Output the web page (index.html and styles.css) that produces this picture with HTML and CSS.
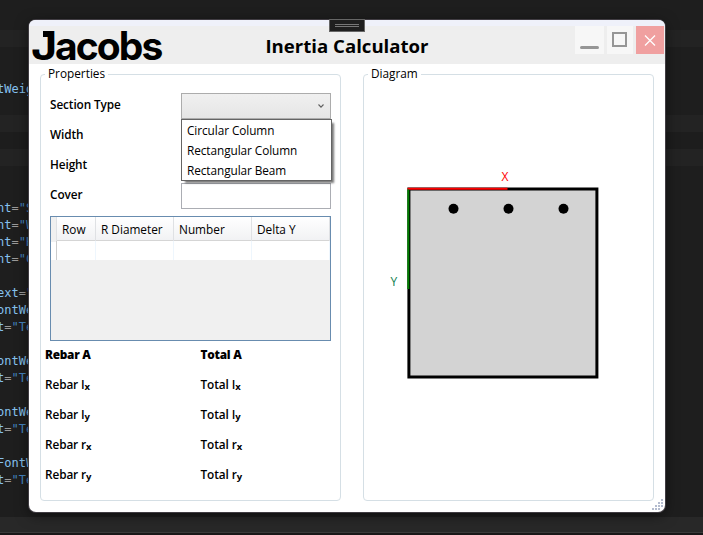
FILE: index.html
```html
<!DOCTYPE html>
<html lang="en">
<head>
<meta charset="utf-8">
<title>Inertia Calculator</title>
<link rel="stylesheet" href="styles.css">
</head>
<body>
<pre class="editor" aria-hidden="true">




<b>tWeig</b>






<b>nt</b>=<i>"S</i>
<b>nt</b>=<i>"W</i>
<b>nt</b>=<i>"H</i>
<b>nt</b>=<i>"C</i>

<b>ext</b>=<i>"</i>
<b>ontWe</b>
<b>t</b>=<i>"Te</i>

<b>ontWe</b>
<b>t</b>=<i>"Te</i>

<b>ontWe</b>
<b>t</b>=<i>"Te</i>

<b>FontW</b>
<b>t</b>=<i>"Te</i>
</pre>
<main class="window">
  <div class="grabber"><span></span></div>
  <header class="titlebar">
    <div class="logo"><span>J</span>acobs</div>
    <h1>Inertia Calculator</h1>
    <div class="controls">
      <button class="min" aria-label="Minimize"><svg width="29" height="28"><path d="M6.500 21.500h16" stroke="#969696" stroke-width="3" stroke-linecap="round"/></svg></button>
      <button class="max" aria-label="Maximize"><svg width="26" height="28"><rect x="6" y="7" width="13" height="13" fill="none" stroke="#969696" stroke-width="2"/></svg></button>
      <button class="close" aria-label="Close"><svg width="28" height="28"><path d="M9 9.500l10 10M19 9.500l-10 10" stroke="#fff" stroke-width="1.300"/></svg></button>
    </div>
  </header>
  <div class="panels">
    <fieldset class="properties">
      <legend>Properties</legend>
      <div class="form">
        <label>Section Type</label>
        <div class="combo">
          <svg width="8" height="6"><path d="M1.500 1.500L4 4.100L6.500 1.500" fill="none" stroke="#606060" stroke-width="1.100"/></svg>
          <ul class="menu"><li>Circular Column</li><li>Rectangular Column</li><li>Rectangular Beam</li></ul>
        </div>
        <label>Width</label><div class="input"></div>
        <label>Height</label><div class="input"></div>
        <label>Cover</label><div class="input"></div>
      </div>
      <div class="table">
        <div class="row head"><span></span><span>Row</span><span>R Diameter</span><span>Number</span><span>Delta Y</span></div>
        <div class="row blank"><span></span><span></span><span></span><span></span><span></span></div>
      </div>
      <div class="results">
        <span class="strong">Rebar A</span><span class="strong">Total A</span>
        <span>Rebar I<sub>x</sub></span><span>Total I<sub>x</sub></span>
        <span>Rebar I<sub>y</sub></span><span>Total I<sub>y</sub></span>
        <span>Rebar r<sub>x</sub></span><span>Total r<sub>x</sub></span>
        <span>Rebar r<sub>y</sub></span><span>Total r<sub>y</sub></span>
      </div>
    </fieldset>
    <fieldset class="diagram">
      <legend>Diagram</legend>
      <svg class="section" width="220" height="220" viewBox="384 164 220 220">
        <rect x="408.900" y="189" width="188" height="188" fill="#d3d3d3" stroke="#000" stroke-width="3"/>
        <path d="M407.500 188.700H507.500" stroke="red" stroke-width="2"/>
        <path d="M408.300 189.500V289" stroke="green" stroke-width="2"/>
        <circle cx="453.500" cy="208.800" r="5"/><circle cx="508.500" cy="208.800" r="5"/><circle cx="563.500" cy="208.800" r="5"/>
        <text x="501.500" y="181" fill="red">X</text>
        <text x="390.500" y="286" fill="#108050">Y</text>
      </svg>
    </fieldset>
  </div>
  <svg class="grip" width="12" height="12" fill="#b4bccf"><path d="M9 0h2v2h-2zM6 3h2v2h-2zM9 3h2v2h-2zM3 6h2v2h-2zM6 6h2v2h-2zM9 6h2v2h-2zM0 9h2v2h-2zM3 9h2v2h-2zM6 9h2v2h-2z"/></svg>
</main>
</body>
</html>
```

FILE: styles.css
```css
* { box-sizing: border-box; }
body {
  margin: 0; width: 703px; height: 535px; overflow: hidden; position: relative;
  font: 500 11.800px/16px "Open Sans", "Noto Sans", sans-serif; color: #000;
  background: linear-gradient(#1e1e1e 30px, #232323 30px 47px, #1e1e1e 47px 115px, #232323 115px 132px, #1d1d1d 132px 149px, #232323 149px 166px, #1e1e1e 166px 517px, #282828 517px 532px, #3a3a3a 532px 533px, #191718 533px);
}
.editor {
  margin: 0; position: absolute; left: -3px; top: 13px;
  font: 12px/17px "DejaVu Sans Mono", monospace; color: #9a9a9a;
}
.editor b { font-weight: 400; color: #86c1ee; }
.editor i { font-style: normal; color: #4585c0; }
.window {
  position: absolute; left: 29px; top: 20px; width: 636px; height: 492px; border-radius: 7px;
  background: #fff; box-shadow: 0 0 0 1px #403c42, 0 3px 14px #0008; padding-top: 6px;
}
.window::before { content: ""; position: absolute; inset: 0 0 auto; height: 6px; background: #eff1fa; border-radius: 7px 7px 0 0; }
.grabber {
  position: absolute; left: 300px; top: -1px; width: 36px; height: 13px; z-index: 2;
  background: #1f1f1f; border: 1px solid #666; display: grid; place-items: center;
}
.grabber span { width: 24px; height: 3px; border: solid #777; border-width: 1px 0; }
.titlebar { height: 38px; background: #eee; display: flex; position: relative; }
.logo { width: 140px; padding-left: 2px; font: 700 39px/39px Inter, sans-serif; letter-spacing: -1.900px; white-space: nowrap; position: relative; }
.logo span { display: inline-block; transform: scaleX(1.150); transform-origin: 0 0; margin-right: 3px; }
.logo::before { content: ""; position: absolute; left: 14px; top: 5px; width: 10px; height: 6px; background: #000; }
h1 { margin: 0; position: absolute; left: 0; right: 0; text-align: center; font-size: 18.600px; line-height: 39px; font-weight: 700; }
.controls { margin-left: auto; display: flex; gap: 3px; padding-right: 1px; height: 28px; }
button { border: 0; padding: 0; height: 28px; background: #f7f7f7; display: block; }
button svg { display: block; }
.close { background: #f0a0a0; }
.panels { display: flex; gap: 22px; padding: 2px 0 0 11px; }
fieldset { margin: 0; padding: 0; min-width: 0; height: 435px; border: 1px solid #d5dfe5; border-radius: 4px; }
.properties { width: 301px; }
.diagram { width: 291px; }
legend { margin-left: 4px; padding: 0 3px; height: 16px; line-height: 15px; }
.form { display: grid; grid-template-columns: 131px 150px; row-gap: 4px; padding: 11px 0 0 9px; font-weight: 650; }
.form label { line-height: 23px; letter-spacing: -0.100px; }
.input, .combo { height: 26px; border: 1px solid #abadb3; background: #fff; }
.combo { position: relative; background: linear-gradient(#f0f0f0, #e5e5e5); border-color: #acacac; }
.combo > svg { position: absolute; right: 5px; top: 9px; }
.menu {
  position: absolute; left: -1px; top: 25px; width: 151px; height: 62px; margin: 0; padding: 0 5px; list-style: none;
  background: #fff; border: 1px solid #646464; box-shadow: 3px 3px 2px -1px #0008; font-weight: 500; line-height: 20px; letter-spacing: -0.070px; z-index: 2;
}
.table { width: 281px; height: 125px; margin: 7px 0 0 9px; border: 1px solid #688caf; background: #f0f0f0; }
.row { display: grid; grid-template-columns: 6px 39px 78px 78px 78px; }
.head { height: 24px; line-height: 25px; background: linear-gradient(#fff, #f1f2f4); border-bottom: 1px solid #d5d5d5; }
.head span { border-right: 1px solid #dfe1e4; padding-left: 5px; }
.head span:first-child { background: #f0f0f0; padding: 0; }
.blank { height: 19px; background: #fff; }
.blank span { border-right: 1px solid #eef6fd; }
.blank span:first-child { border-color: #ccc; }
.results { display: grid; grid-template-columns: 155.500px 1fr; grid-auto-rows: 30px; padding: 5px 0 0 4px; font-weight: 650; letter-spacing: -0.100px; }
.strong { font-weight: 800; letter-spacing: -0.250px; }
sub { font-size: 9.500px; line-height: 0; vertical-align: -1px; font-weight: 700; }
.section { display: block; margin: 82px 0 0 20px; font-size: 12px; }
.grip { position: absolute; right: 1px; bottom: 1px; }
```
